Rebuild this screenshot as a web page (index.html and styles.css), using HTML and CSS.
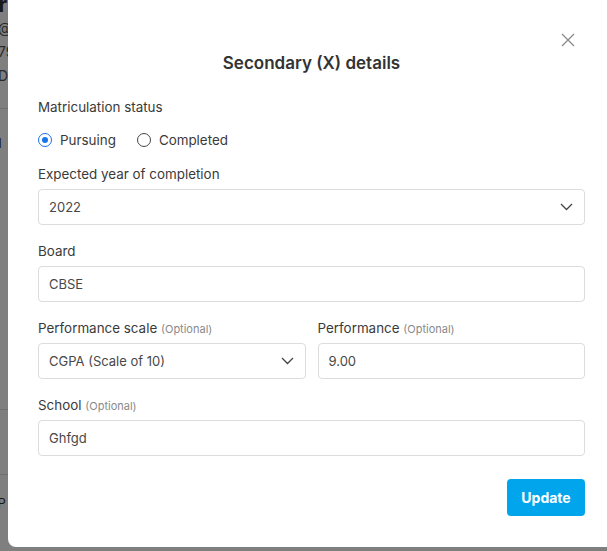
FILE: index.html
```html
<!DOCTYPE html>
<html>
<head>
<meta charset="utf-8">
<link rel="stylesheet" href="styles.css">
</head>
<body>
<div class="page">
  <div class="bg-title">Pr</div>
  <div class="bg-line">@</div>
  <div class="bg-line">79</div>
  <div class="bg-line">De</div>
  <div class="bg-sep"></div>
  <div class="bg-n">N</div>
  <div class="bg-sep s2"></div>
  <div class="bg-sep s3"></div>
  <div class="bg-ip">IP</div>
</div>
<div class="overlay"></div>
<div class="modal">
  <button class="close" aria-label="Close">
    <svg width="14" height="14" viewBox="0 0 14 14"><path d="M1 1L13 13M13 1L1 13" stroke="#8a8a8a" stroke-width="1.3" fill="none"/></svg>
  </button>
  <h2 class="title">Secondary (X) details</h2>

  <div class="label">Matriculation status</div>
  <div class="radios">
    <label class="radio"><span class="dot checked"></span>Pursuing</label>
    <label class="radio"><span class="dot"></span>Completed</label>
  </div>

  <div class="group">
    <div class="label">Expected year of completion</div>
    <div class="field select"><span>2022</span><svg class="chev" width="13" height="8" viewBox="0 0 13 8"><path d="M1 1L6.5 6.5L12 1" stroke="#444" stroke-width="1.3" fill="none"/></svg></div>
  </div>

  <div class="group">
    <div class="label">Board</div>
    <div class="field"><span>CBSE</span></div>
  </div>

  <div class="group row">
    <div class="col">
      <div class="label">Performance scale <span class="opt">(Optional)</span></div>
      <div class="field select"><span>CGPA (Scale of 10)</span><svg class="chev" width="13" height="8" viewBox="0 0 13 8"><path d="M1 1L6.5 6.5L12 1" stroke="#444" stroke-width="1.3" fill="none"/></svg></div>
    </div>
    <div class="col">
      <div class="label">Performance <span class="opt">(Optional)</span></div>
      <div class="field"><span>9.00</span></div>
    </div>
  </div>

  <div class="group">
    <div class="label">School <span class="opt">(Optional)</span></div>
    <div class="field"><span>Ghfgd</span></div>
  </div>

  <div class="actions">
    <button class="update">Update</button>
  </div>
</div>
</body>
</html>
```
FILE: styles.css
```css
html, body {
  margin: 0;
  padding: 0;
  width: 607px;
  height: 551px;
  overflow: hidden;
  background: #fff;
  font-family: Inter, "Liberation Sans", sans-serif;
}
.page {
  position: absolute;
  left: -30px;
  top: -8px;
  width: 300px;
  color: #333;
}
.bg-title {
  font-size: 22px;
  font-weight: 700;
  line-height: 24px;
  margin-left: 14px;
}
.bg-line {
  font-size: 14px;
  line-height: 24px;
  margin-left: 28px;
  color: #555;
}
.bg-sep {
  height: 1px;
  background: #e0e0e0;
  margin-top: 20px;
}
.bg-n {
  margin-top: 26px;
  margin-left: 22px;
  font-size: 13px;
  color: #333;
}
.bg-sep.s2 { margin-top: 258px; }
.bg-sep.s3 { margin-top: 64px; }
.bg-ip {
  margin-top: 20px;
  margin-left: 24px;
  font-size: 13px;
  color: #333;
}
.overlay {
  position: absolute;
  inset: 0;
  background: rgba(0, 0, 0, 0.5);
}
.modal {
  position: absolute;
  left: 8px;
  top: -10px;
  width: 607px;
  height: 557px;
  box-sizing: border-box;
  padding: 61px 30px 0 30px;
  background: #fff;
  border-radius: 8px;
  color: #333;
}
.close {
  position: absolute;
  right: 40px;
  top: 43px;
  width: 14px;
  height: 14px;
  padding: 0;
  border: 0;
  background: none;
  display: flex;
}
.title {
  margin: 0 0 22px 0;
  text-align: center;
  font-size: 17px;
  font-weight: 600;
  line-height: 24px;
  color: #333;
}
.label {
  font-size: 13.4px;
  line-height: 20px;
  height: 20px;
  color: #3a3a3a;
  margin-bottom: 5px;
}
.opt {
  font-size: 11px;
  line-height: 1;
  color: #8a8a8a;
}
.radios {
  display: flex;
  gap: 21px;
  margin-top: 13px;
  margin-bottom: 14px;
}
.radio {
  display: flex;
  align-items: center;
  gap: 8px;
  font-size: 13.4px;
  line-height: 20px;
  color: #3a3a3a;
}
.dot {
  width: 14px;
  height: 14px;
  box-sizing: border-box;
  border: 1.5px solid #444;
  border-radius: 50%;
  display: flex;
  align-items: center;
  justify-content: center;
}
.dot.checked {
  border-color: #1a73e8;
}
.dot.checked::after {
  content: "";
  width: 6px;
  height: 6px;
  border-radius: 50%;
  background: #1a73e8;
}
.group {
  margin-bottom: 16px;
}
.row {
  display: flex;
  gap: 12px;
}
.col {
  flex: 1;
}
.field {
  height: 36px;
  box-sizing: border-box;
  border: 1px solid #dcdcdc;
  border-radius: 4px;
  padding: 0 11px 0 10px;
  display: flex;
  align-items: center;
  justify-content: space-between;
  font-size: 13px;
  color: #484848;
}
.actions {
  display: flex;
  justify-content: flex-end;
  margin-top: 23px;
}
.update {
  width: 78px;
  height: 37px;
  border: 0;
  border-radius: 4px;
  background: #00a5ec;
  color: #fff;
  font-family: Inter, "Liberation Sans", sans-serif;
  font-size: 14px;
  font-weight: 700;
}
```
